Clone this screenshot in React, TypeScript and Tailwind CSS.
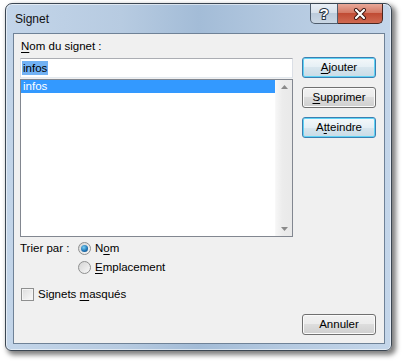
const U = ({ children }: { children: string }) => <span className="underline underline-offset-[2px] decoration-1">{children}</span>;

const Btn = ({ children, focus }: { children: React.ReactNode; focus?: boolean }) => (
  <div
    className={
      focus
        ? "h-[21px] w-[74px] rounded-[3px] border border-[#3c7fb1] shadow-[inset_0_0_0_1px_#5fd3f5] bg-[linear-gradient(#f4f8fa_0%,#e5eff5_50%,#d8e6ee_50%,#c8dbe6_100%)] flex items-center justify-center leading-[15px]"
        : "h-[21px] w-[74px] rounded-[3px] border border-[#707070] shadow-[inset_0_0_0_1px_#fbfbfb] bg-[linear-gradient(#f2f2f2_0%,#ebebeb_50%,#dddddd_50%,#cfcfcf_100%)] flex items-center justify-center leading-[15px]"
    }
  >
    {children}
  </div>
);

const Radio = ({ checked }: { checked?: boolean }) => (
  <div className="w-[13px] h-[13px] rounded-full border border-[#8e8f8f] bg-[linear-gradient(135deg,#d4d4d4,#f8f8f8)] flex items-center justify-center">
    {checked && (
      <div className="w-[7px] h-[7px] rounded-full bg-[radial-gradient(circle_at_40%_35%,#7ad0f5,#1a6fb0_60%,#0d3f6e)]" />
    )}
  </div>
);

export default function App() {
  return (
    <div className="w-[402px] h-[364px] bg-white pl-[5px] pt-[3px] font-['Liberation_Sans',Arial,sans-serif] text-[11.5px] text-black">
      <div className="w-[387px] h-[348px] rounded-t-[7px] rounded-b-[6px] border border-[#3b4652] bg-[linear-gradient(90deg,#c3d5e9_0%,#b7cbe1_30%,#a3bcd7_50%,#b4c9e0_72%,#c4d6ea_100%)] shadow-[inset_0_0_0_1px_rgba(255,255,255,0.55),3px_3px_5px_1px_rgba(0,0,0,0.5)] flex flex-col">
        <div className="h-[29px] flex items-start pl-[9px]">
          <span className="mt-[8px] leading-[15px] text-[12px] text-[#111]">Signet</span>
          <div className="ml-auto mr-[8px] flex">
            <div className="w-[28px] h-[20px] rounded-bl-[5px] border border-t-0 border-[#4f5d6d] bg-[linear-gradient(#e9eff6_0%,#d6e0ea_50%,#bccbdb_50%,#cad7e4_100%)] flex items-center justify-center">
              <span className="font-bold text-[15px] leading-[15px] text-white [-webkit-text-stroke:2px_#2a3644] [paint-order:stroke_fill]">?</span>
            </div>
            <div className="w-[45px] h-[20px] rounded-br-[5px] border border-t-0 border-l-0 border-[#4a2620] bg-[linear-gradient(#e9a899_0%,#d47a66_45%,#c04b34_50%,#d06a52_100%)] flex items-center justify-center">
              <svg width="14" height="12" viewBox="0 0 14 12">
                <path d="M3 2 L11 10 M11 2 L3 10" stroke="#3a1510" strokeWidth="4" strokeLinecap="round" />
                <path d="M3 2 L11 10 M11 2 L3 10" stroke="#ffffff" strokeWidth="2.2" strokeLinecap="round" />
              </svg>
            </div>
          </div>
        </div>
        <div className="ml-[7px] w-[372px] h-[311px] border border-[#6f8297] bg-[#f0f0f0] flex pl-[6px] pr-[8px] pb-[8px]">
          <div className="w-[273px] flex flex-col">
            <div className="pt-[5px] mb-[4px] leading-[15px] pl-[1px]">
              <U>N</U>om du signet :
            </div>
            <div className="h-[20px] border border-[#abadb3] border-x-[#dbdfe6] border-b-[#e3e9ef] bg-white flex items-center pl-[1px]">
              <span className="bg-[#72b2f4] leading-[14px] px-[1px]">infos</span>
            </div>
            <div className="mt-[1px] h-[158px] border border-[#828790] bg-white flex">
              <div className="flex-1">
                <div className="h-[13px] bg-[#3399ff] text-white leading-[13px] pl-[2px]">infos</div>
              </div>
              <div className="w-[17px] bg-[linear-gradient(90deg,#f6f6f6,#ececec_40%,#e9e9e9)] border-l border-[#f8f8f8] flex flex-col items-center justify-between py-[5px]">
                <svg width="7" height="4" viewBox="0 0 7 4"><path d="M0 4 L3.5 0 L7 4 Z" fill="#8a8a8a" /></svg>
                <svg width="7" height="4" viewBox="0 0 7 4"><path d="M0 0 L3.5 4 L7 0 Z" fill="#8a8a8a" /></svg>
              </div>
            </div>
            <div className="mt-[4px] h-[15px] flex items-center leading-[15px]">
              <span className="w-[58px]">Trier par :</span>
              <Radio checked />
              <span className="ml-[4px]">N<U>o</U>m</span>
            </div>
            <div className="mt-[4px] h-[15px] flex items-center leading-[15px] pl-[58px]">
              <Radio />
              <span className="ml-[4px]"><U>E</U>mplacement</span>
            </div>
            <div className="mt-[12px] h-[15px] flex items-center leading-[15px] pl-[1px]">
              <div className="w-[13px] h-[13px] border border-[#8e8f8f] bg-[linear-gradient(135deg,#dcdcdc,#fafafa)] shadow-[inset_0_0_0_1px_#f4f4f4]" />
              <span className="ml-[4px]">Signets <U>m</U>asqués</span>
            </div>
          </div>
          <div className="ml-[9px] flex flex-col pt-[23px]">
            <Btn focus><U>A</U>jouter</Btn>
            <div className="mt-[9px]"><Btn><U>S</U>upprimer</Btn></div>
            <div className="mt-[9px]"><Btn focus>A<U>t</U>teindre</Btn></div>
            <div className="mt-auto"><Btn>Annuler</Btn></div>
          </div>
        </div>
      </div>
    </div>
  );
}
